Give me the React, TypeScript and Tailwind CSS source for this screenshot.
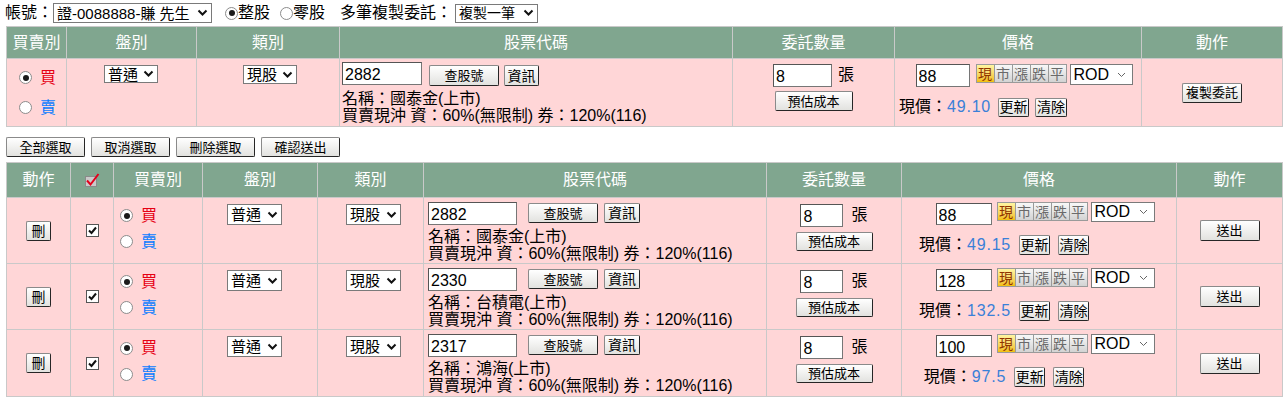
import React from 'react';

type Row = { code: string; name: string; price: string; last: string };

const rows: Row[] = [
  { code: '2882', name: '國泰金(上市)', price: '88', last: '49.15' },
  { code: '2330', name: '台積電(上市)', price: '128', last: '132.5' },
  { code: '2317', name: '鴻海(上市)', price: '100', last: '97.5' },
];

function Radio({ checked }: { checked?: boolean }) {
  return (
    <span className="w-[13px] h-[13px] shrink-0 rounded-full border border-[#8c8c8c] bg-white flex items-center justify-center">
      {checked && <span className="w-[6px] h-[6px] rounded-full bg-[#1a1a1a]" />}
    </span>
  );
}

function Chevron({ thin }: { thin?: boolean }) {
  if (thin) {
    return (
      <svg width="9" height="6" viewBox="0 0 9 6" className="shrink-0">
        <path d="M1 1 L4.5 4.5 L8 1" fill="none" stroke="#666" strokeWidth="1" />
      </svg>
    );
  }
  return (
    <svg width="11" height="8" viewBox="0 0 11 8" className="shrink-0">
      <path d="M1.5 1.5 L5.5 5.5 L9.5 1.5" fill="none" stroke="#111" strokeWidth="2" />
    </svg>
  );
}

function Select({ value, className, thin }: { value: string; className: string; thin?: boolean }) {
  return (
    <div className={`flex items-center justify-between shrink-0 bg-white border border-[#7a7a7a] pl-[3px] pr-[3px] leading-none whitespace-nowrap text-black ${className}`}>
      <span>{value}</span>
      <Chevron thin={thin} />
    </div>
  );
}

function Btn({ children, className }: { children: React.ReactNode; className: string }) {
  return (
    <button
      type="button"
      className={`flex items-center justify-center shrink-0 leading-none text-black border border-[#8a8a8a] border-r-[#262626] border-b-[#262626] rounded-[2px] bg-linear-to-b from-white to-[#e2e2df] ${className}`}
    >
      {children}
    </button>
  );
}

function TextBox({ value, className }: { value: string; className: string }) {
  return (
    <input
      readOnly
      value={value}
      className={`shrink-0 bg-white border border-[#767676] border-t-[#555] border-l-[#555] px-[2px] pt-[3px] text-[16px] leading-none text-black outline-none ${className}`}
    />
  );
}

function CheckBox() {
  return (
    <span className="w-[13px] h-[13px] border border-[#555] bg-white flex items-center justify-center">
      <svg width="9" height="9" viewBox="0 0 9 9">
        <path d="M1 4.5 L3.5 7 L8 1.5" fill="none" stroke="#111" strokeWidth="2" />
      </svg>
    </span>
  );
}

function HeaderCheck() {
  return (
    <svg width="16" height="14" viewBox="0 0 16 14">
      <rect x="1.5" y="3.5" width="11" height="10" fill="#c9c9c9" stroke="#8a8a8a" />
      <path d="M3 7.5 L6.5 11.5 L14.5 1" fill="none" stroke="#e3001b" strokeWidth="2" />
    </svg>
  );
}

function PriceKeys() {
  const keys = ['現', '市', '漲', '跌', '平'];
  return (
    <div className="flex shrink-0">
      {keys.map((k, i) => (
        <span
          key={k}
          className={`w-[19px] h-[19px] flex items-center justify-center text-[14px] leading-none border border-[#9a9a9a] ${
            i === 0
              ? 'bg-linear-to-b from-[#fff5a0] to-[#f2bf00] text-[#8f3300]'
              : '-ml-px bg-linear-to-b from-[#f8f8f8] to-[#d3d3d3] text-[#6a6a6a]'
          }`}
        >
          {k}
        </span>
      ))}
    </div>
  );
}

function StockInfo({ name }: { name: string }) {
  return (
    <div className="text-[16px] leading-[17px] text-black whitespace-nowrap">
      <div>名稱：{name}</div>
      <div>買賣現沖 資：60%(無限制) 券：120%(116)</div>
    </div>
  );
}

const head = 'bg-[#80a68f] text-white flex items-center justify-center';
const cell = 'bg-[#ffd6d7]';

export default function App() {
  return (
    <div className="w-[1288px] h-[402px] bg-white text-[16px] text-black font-[Liberation_Sans,Noto_Sans_CJK_TC,sans-serif]">
      {/* account bar */}
      <div className="h-[26px] flex items-center pl-[5px]">
        <span>帳號：</span>
        <Select className="w-[159px] h-[20px] text-[15px]" value="證-0088888-賺 先生" />
        <div className="ml-[13px] flex items-center">
          <Radio checked />
          <span>整股</span>
        </div>
        <div className="ml-[10px] flex items-center">
          <Radio />
          <span>零股</span>
        </div>
        <span className="ml-[15px]">多筆複製委託：</span>
        <Select className="ml-[3px] w-[83px] h-[19px] text-[14px]" value="複製一筆" />
      </div>

      {/* copy order table */}
      <div className="ml-[6px] w-fit bg-[#c9c9c9] p-px grid grid-cols-[59px_129px_142px_392px_161px_246px_140px] gap-px">
        <div className={`${head} h-[31px]`}>買賣別</div>
        <div className={head}>盤別</div>
        <div className={head}>類別</div>
        <div className={head}>股票代碼</div>
        <div className={head}>委託數量</div>
        <div className={head}>價格</div>
        <div className={head}>動作</div>

        <div className={`${cell} h-[67px] flex flex-col justify-center pl-[12px]`}>
          <div className="h-[30px] flex items-center gap-[8px]">
            <Radio checked />
            <span className="text-[#e60012]">買</span>
          </div>
          <div className="h-[30px] flex items-center gap-[8px]">
            <Radio />
            <span className="text-[#0a7cff]">賣</span>
          </div>
        </div>
        <div className={`${cell} pt-[6px] pl-[37px]`}>
          <Select className="w-[54px] h-[18px] text-[15px]" value="普通" />
        </div>
        <div className={`${cell} pt-[6px] pl-[46px]`}>
          <Select className="w-[54px] h-[19px] text-[15px]" value="現股" />
        </div>
        <div className={`${cell} pt-[3px] pl-[2px]`}>
          <div className="flex items-start">
            <TextBox value="2882" className="w-[80px] h-[23px]" />
            <Btn className="ml-[7px] mt-[3px] w-[70px] h-[21px] text-[13px]">查股號</Btn>
            <Btn className="ml-[5px] mt-[3px] w-[35px] h-[21px] text-[14px]">資訊</Btn>
          </div>
          <div className="mt-[4px]">
            <StockInfo name="國泰金(上市)" />
          </div>
        </div>
        <div className={`${cell} pt-[4px] flex flex-col items-center`}>
          <div className="flex items-center">
            <TextBox value="8" className="w-[59px] h-[23px]" />
            <span className="ml-[6px]">張</span>
          </div>
          <Btn className="mt-[4px] w-[78px] h-[20px] text-[13px]">預估成本</Btn>
        </div>
        <div className={`${cell} pt-[5px]`}>
          <div className="flex items-start justify-center pl-[12px]">
            <TextBox value="88" className="w-[54px] h-[23px]" />
            <div className="ml-[6px]">
              <PriceKeys />
            </div>
            <Select thin className="ml-[3px] w-[63px] h-[21px] text-[16px] pr-[6px]" value="ROD" />
          </div>
          <div className="mt-[8px] flex items-center justify-center pr-[70px] whitespace-nowrap">
            <span>現價：</span>
            <span className="text-[#3a80d8] tracking-[0.8px]">49.10</span>
            <Btn className="ml-[7px] w-[31px] h-[19px] text-[14px]">更新</Btn>
            <Btn className="ml-[6px] w-[32px] h-[19px] text-[14px]">清除</Btn>
          </div>
        </div>
        <div className={`${cell} flex items-center justify-center`}>
          <Btn className="w-[60px] h-[20px] text-[13px]">複製委託</Btn>
        </div>
      </div>

      {/* batch buttons */}
      <div className="mt-[10px] ml-[6px] flex gap-[6px]">
        <Btn className="w-[79px] h-[20px] text-[13px]">全部選取</Btn>
        <Btn className="w-[79px] h-[20px] text-[13px]">取消選取</Btn>
        <Btn className="w-[79px] h-[20px] text-[13px]">刪除選取</Btn>
        <Btn className="w-[79px] h-[20px] text-[13px]">確認送出</Btn>
      </div>

      {/* pending orders */}
      <div className="mt-[5px] ml-[6px] w-fit bg-[#c9c9c9] p-px grid grid-cols-[63px_42px_88px_114px_105px_342px_134px_274px_105px] gap-px">
        <div className={`${head} h-[34px]`}>動作</div>
        <div className={head}>
          <HeaderCheck />
        </div>
        <div className={head}>買賣別</div>
        <div className={head}>盤別</div>
        <div className={head}>類別</div>
        <div className={head}>股票代碼</div>
        <div className={head}>委託數量</div>
        <div className={head}>價格</div>
        <div className={head}>動作</div>

        {rows.map((r, i) => (
          <React.Fragment key={r.code}>
            <div className={`${cell} ${i === 2 ? 'h-[66px]' : 'h-[65px]'} flex items-center justify-center`}>
              <Btn className="w-[25px] h-[20px] text-[14px]">刪</Btn>
            </div>
            <div className={`${cell} flex items-center justify-center`}>
              <CheckBox />
            </div>
            <div className={`${cell} flex flex-col justify-center pl-[6px] pb-[4px]`}>
              <div className="h-[26px] flex items-center gap-[8px]">
                <Radio checked />
                <span className="text-[#e60012]">買</span>
              </div>
              <div className="h-[26px] flex items-center gap-[8px]">
                <Radio />
                <span className="text-[#0a7cff]">賣</span>
              </div>
            </div>
            <div className={`${cell} pt-[6px] pl-[24px]`}>
              <Select className="w-[55px] h-[21px] text-[15px]" value="普通" />
            </div>
            <div className={`${cell} pt-[6px] pl-[28px]`}>
              <Select className="w-[55px] h-[21px] text-[15px]" value="現股" />
            </div>
            <div className={`${cell} pt-[4px] pl-[4px]`}>
              <div className="flex items-start">
                <TextBox value={r.code} className="w-[89px] h-[23px]" />
                <Btn className="ml-[11px] mt-[1px] w-[70px] h-[20px] text-[13px]">查股號</Btn>
                <Btn className="ml-[6px] mt-[1px] w-[36px] h-[20px] text-[14px]">資訊</Btn>
              </div>
              <div className="mt-[3px]">
                <StockInfo name={r.name} />
              </div>
            </div>
            <div className={`${cell} pt-[5px] flex flex-col items-center`}>
              <div className="flex items-center">
                <TextBox value="8" className="w-[43px] h-[23px]" />
                <span className="ml-[8px]">張</span>
              </div>
              <Btn className="mt-[5px] w-[77px] h-[19px] text-[13px]">預估成本</Btn>
            </div>
            <div className={`${cell} pt-[4px]`}>
              <div className="flex items-start justify-center pl-[12px]">
                <TextBox value={r.price} className="w-[56px] h-[22px] mt-[1px]" />
                <div className="ml-[5px]">
                  <PriceKeys />
                </div>
                <Select thin className="ml-[3px] w-[64px] h-[20px] text-[16px] pr-[6px]" value="ROD" />
              </div>
              <div className="mt-[8px] flex items-center justify-center pr-[70px] whitespace-nowrap">
                <span>現價：</span>
                <span className="text-[#3a80d8] tracking-[0.8px]">{r.last}</span>
                <Btn className="ml-[8px] w-[31px] h-[20px] text-[14px]">更新</Btn>
                <Btn className="ml-[8px] w-[31px] h-[20px] text-[14px]">清除</Btn>
              </div>
            </div>
            <div className={`${cell} flex items-center justify-center`}>
              <Btn className="w-[60px] h-[21px] text-[13px]">送出</Btn>
            </div>
          </React.Fragment>
        ))}
      </div>
    </div>
  );
}
